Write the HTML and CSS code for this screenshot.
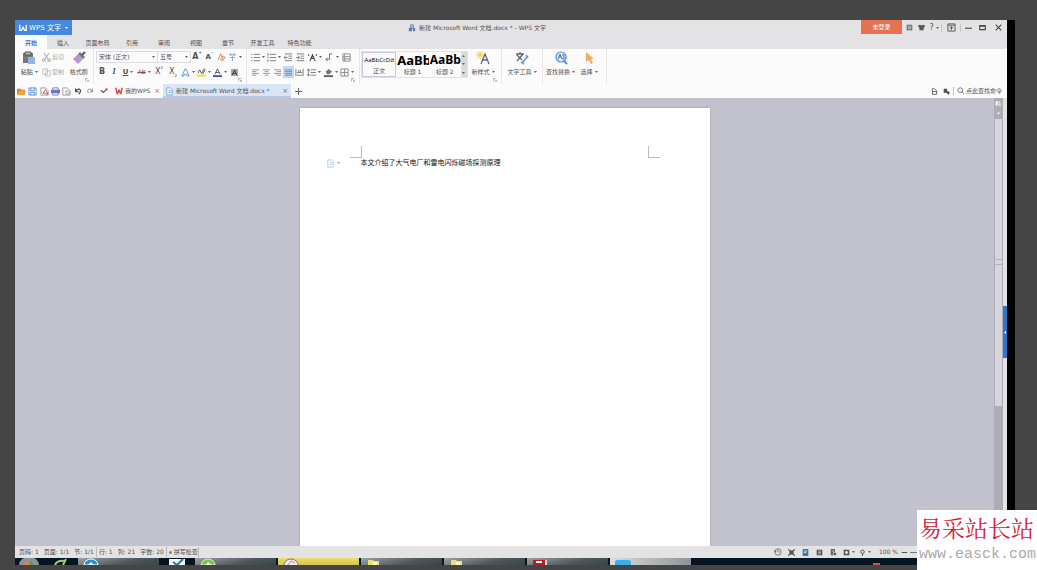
FILE: index.html
```
<!DOCTYPE html>
<html lang="zh-CN">
<head>
    <meta charset="UTF-8">
    <meta name="viewport" content="width=device-width, initial-scale=1.0">
    <title>新建 Microsoft Word 文档.docx * - WPS 文字</title>
    <link rel="stylesheet" href="styles.css">
</head>
<body>
    <svg class="sprite" aria-hidden="true">
        <symbol id="arr" viewBox="0 0 3 2"><path d="M0 0h3L1.500 2z" fill="#666"/></symbol>
        <symbol id="corner" viewBox="0 0 4 4"><path d="M.5 3.500v-3h3M1.500 1.500l2 2M3.500 2v1.500H2" fill="none" stroke="#999" stroke-width=".6"/></symbol>
        <symbol id="lines" viewBox="0 0 10 10"><path d="M1 2h8M1 4h5M1 6h8M1 8h5" stroke="#888" stroke-width=".9"/></symbol>
        <symbol id="page" viewBox="0 0 10 10"><path d="M2 1h4l2 2v6H2z" fill="#fff" stroke="#7ba3d4"/><path d="M4 4h3M4 6h3" stroke="#7ba3d4"/></symbol>
        <symbol id="wlogo" viewBox="0 0 10 10"><path d="M0 1h2l1 5 1-3h2l1 3 1-5h2L8 9H6L5 6 4 9H2z" fill="#e04348"/></symbol>
    </svg>

    <div class="screen">
        <div class="desktop">
            <div class="app">
                <header class="titlebar">
                    <button class="brand">
                        <svg class="i8" viewBox="0 0 10 10"><path d="M1 1v7h2l2-4 2 4h2V1" fill="none" stroke="#fff" stroke-width="1.600"/></svg>
                        WPS 文字
                        <svg class="arr light"><use href="#arr"/></svg>
                    </button>
                    <h1 class="title">
                        <svg class="i8" viewBox="0 0 10 10"><path d="M3 1h4v4H3z" fill="#a9bcd8" stroke="#6781a9"/><path d="M1 5h4v4H1zM6 5h3v4H6z" fill="#5d7fb5"/></svg>
                        新建 Microsoft Word 文档.docx * - WPS 文字
                    </h1>
                    <div class="window-tools">
                        <button class="login">未登录</button>
                        <button class="t12" aria-label="稻壳"><svg class="i7" viewBox="0 0 10 10"><path d="M1 1h8v8H1z" fill="#666"/><path d="M2 3h6M3 5h4v2H3z" stroke="#ddd" fill="none"/></svg></button>
                        <button class="t12" aria-label="皮肤"><svg class="i7" viewBox="0 0 10 10"><path d="M0 2l3-1q2 2 4 0l3 1-1 3H8v4H2V5H1z" fill="#555"/></svg></button>
                        <button class="t14 help">?<svg class="arr"><use href="#arr"/></svg></button>
                        <span class="sep"></span>
                        <button class="t18" aria-label="功能区"><svg class="i9" viewBox="0 0 10 10"><path d="M1 1h8v8H1zM1 2.500h8M5 8V4M3 6l2-2 2 2" fill="none" stroke="#555"/></svg></button>
                        <span class="sep"></span>
                        <button class="t14" aria-label="最小化"><svg class="i7" viewBox="0 0 10 10"><path d="M0 6h10" stroke="#444" stroke-width="1.500"/></svg></button>
                        <button class="t14" aria-label="最大化"><svg class="i7" viewBox="0 0 10 10"><path d="M1 2h8v6H1zM1 3h8" fill="none" stroke="#444" stroke-width="1.500"/></svg></button>
                        <button class="t18" aria-label="关闭"><svg class="i7" viewBox="0 0 10 10"><path d="M1 1l8 8M9 1L1 9" stroke="#444" stroke-width="1.500"/></svg></button>
                    </div>
                </header>

                <nav class="menu">
                    <a href="#" class="active">开始</a>
                    <a href="#">插入</a>
                    <a href="#" class="wide">页面布局</a>
                    <a href="#">引用</a>
                    <a href="#">审阅</a>
                    <a href="#">视图</a>
                    <a href="#">章节</a>
                    <a href="#" class="wide">开发工具</a>
                    <a href="#" class="wide">特色功能</a>
                </nav>

                <div class="ribbon">
                    <section class="group clipboard">
                        <button class="big">
                            <svg class="i14" viewBox="0 0 14 14"><path d="M1 2h10v10H1z" fill="#777"/><path d="M3 1h6v3H3z" fill="#bbb" stroke="#555"/><path d="M6 6h7v7H6z" fill="#8eb4ea"/></svg>
                            <span>粘贴<svg class="arr"><use href="#arr"/></svg></span>
                        </button>
                        <div class="stack">
                            <button class="off"><svg class="i9" viewBox="0 0 10 10"><path d="M2 0l5 7M8 0L3 7" stroke="#999"/><circle cx="2" cy="8" r="1.500" fill="none" stroke="#999"/><circle cx="8" cy="8" r="1.500" fill="none" stroke="#999"/></svg>剪切</button>
                            <button class="off"><svg class="i9" viewBox="0 0 10 10"><path d="M1 1h5v6H1zM4 3h5v6H4z" fill="#fff" stroke="#bbb"/></svg>复制</button>
                        </div>
                        <button class="big">
                            <svg class="i14" viewBox="0 0 14 14"><path d="M1 8l5-5 5 5-5 5z" fill="#b795d8"/><path d="M6 3l2-2 5 5-2 2z" fill="#777"/><path d="M10 4l3-3" stroke="#555" stroke-width="2"/></svg>
                            <span>格式刷</span>
                        </button>
                        <svg class="corner"><use href="#corner"/></svg>
                    </section>

                    <section class="group font">
                        <div class="row">
                            <label class="combo face"><select aria-label="字体"><option>宋体 (正文)</option></select><svg class="arr"><use href="#arr"/></svg></label>
                            <label class="combo size"><select aria-label="字号"><option>五号</option></select><svg class="arr"><use href="#arr"/></svg></label>
                            <button class="t12 glyph">A<sup>+</sup></button>
                            <button class="t12 glyph small">A<sup>-</sup></button>
                            <button class="t12" aria-label="清除格式"><svg class="i9" viewBox="0 0 10 10"><path d="M1 8l3-7 3 6" fill="none" stroke="#e2a04a" stroke-width="1.200"/><path d="M4 7l3-4 2 2-3 4z" fill="#f3cf8e" stroke="#b88"/></svg></button>
                            <button class="t16" aria-label="拼音"><svg class="i9" viewBox="0 0 10 10"><path d="M1 2h8M3 0v3M7 0v3M5 3v6M2 5h6" stroke="#8ba4c8"/></svg><svg class="arr"><use href="#arr"/></svg></button>
                        </div>
                        <div class="row">
                            <button class="t12 glyph">B</button>
                            <button class="t12 glyph italic">I</button>
                            <button class="t16 glyph under"><u>U</u><svg class="arr"><use href="#arr"/></svg></button>
                            <button class="t16 strike"><s>AB</s><svg class="arr"><use href="#arr"/></svg></button>
                            <button class="t14 script">X<sup>2</sup></button>
                            <button class="t14 script">X<sub>2</sub></button>
                            <button class="t16" aria-label="文字效果"><svg class="i9" viewBox="0 0 10 10"><path d="M1 9l3.500-8h1L9 9H7L6.500 7h-3L3 9z" fill="#fff" stroke="#5c8fda"/></svg><svg class="arr"><use href="#arr"/></svg></button>
                            <button class="t16" aria-label="突出显示"><svg class="i9" viewBox="0 0 10 10"><path d="M1 6l2-4 2 4M5 6l3-5 1 1-3 5" fill="none" stroke="#555"/><path d="M0 8.500h10" stroke="#f4e800" stroke-width="2"/></svg><svg class="arr"><use href="#arr"/></svg></button>
                            <button class="t16" aria-label="字体颜色"><svg class="i9" viewBox="0 0 10 10"><path d="M2 7l3-6 3 6M3 5h4" fill="none" stroke="#555"/><path d="M0 9h10" stroke="#2636a8" stroke-width="1.800"/></svg><svg class="arr"><use href="#arr"/></svg></button>
                            <button class="t12" aria-label="底纹"><svg class="i9" viewBox="0 0 10 10"><path d="M1 1h8v8H1z" fill="#aaa"/><path d="M2.500 8L5 2l2.500 6M3 6h4" fill="none" stroke="#333"/></svg></button>
                        </div>
                        <svg class="corner"><use href="#corner"/></svg>
                    </section>

                    <section class="group para">
                        <div class="row">
                            <button class="t16" aria-label="项目符号"><svg class="i9" viewBox="0 0 10 10"><path d="M3 1.500h7M3 5h7M3 8.500h7M0 1.500h1.500M0 5h1.500M0 8.500h1.500" stroke="#777"/></svg><svg class="arr"><use href="#arr"/></svg></button>
                            <button class="t16" aria-label="编号"><svg class="i9" viewBox="0 0 10 10"><path d="M3 1.500h7M3 5h7M3 8.500h7M1 0v3M1 4v2M1 7v3" stroke="#777"/></svg><svg class="arr"><use href="#arr"/></svg></button>
                            <button class="t12" aria-label="减少缩进"><svg class="i9" viewBox="0 0 10 10"><path d="M1 1h8M5 3.500h4M5 6h4M1 8.500h8M4 5H0M2 3L0 5l2 2" fill="none" stroke="#777"/></svg></button>
                            <button class="t12" aria-label="增加缩进"><svg class="i9" viewBox="0 0 10 10"><path d="M1 1h8M5 3.500h4M5 6h4M1 8.500h8M0 5h4M2 3l2 2-2 2" fill="none" stroke="#777"/></svg></button>
                            <button class="t18" aria-label="中文版式"><svg class="i9" viewBox="0 0 10 10"><path d="M2 9l3-7 3 7M3 6h4M0 1l1 2M10 1L9 3" fill="none" stroke="#444" stroke-width="1.200"/></svg><svg class="arr"><use href="#arr"/></svg></button>
                            <button class="t16" aria-label="段落标记"><svg class="i9" viewBox="0 0 10 10"><path d="M5 1h3M5 1v6M3 5L1 7l2 2M1 7h4" fill="none" stroke="#666"/></svg><svg class="arr"><use href="#arr"/></svg></button>
                            <button class="t12" aria-label="制表位"><svg class="i9" viewBox="0 0 10 10"><path d="M1 1h8v8H1zM1 4h8M1 6.500h8M3 1v8" fill="none" stroke="#888"/></svg></button>
                        </div>
                        <div class="row">
                            <button class="t11" aria-label="左对齐"><svg class="i9"><use href="#lines"/></svg></button>
                            <button class="t11" aria-label="居中"><svg class="i9" viewBox="0 0 10 10"><path d="M1 2h8M3 4h4M1 6h8M3 8h4" stroke="#888" stroke-width=".9"/></svg></button>
                            <button class="t11" aria-label="右对齐"><svg class="i9" viewBox="0 0 10 10"><path d="M1 2h8M4 4h5M1 6h8M4 8h5" stroke="#888" stroke-width=".9"/></svg></button>
                            <button class="t11 on" aria-label="两端对齐"><svg class="i9" viewBox="0 0 10 10"><path d="M1 2h8M1 4h8M1 6h8M1 8h8" stroke="#5f7da8" stroke-width=".9"/></svg></button>
                            <button class="t11" aria-label="分散对齐"><svg class="i9" viewBox="0 0 10 10"><path d="M1 1v8M9 1v8M2 5h6M2 8h6M4 2v3M6 2v3" stroke="#777"/></svg></button>
                            <button class="t18" aria-label="行距"><svg class="i9" viewBox="0 0 10 10"><path d="M4 2h6M4 5h6M4 8h6M1.500 1v8M0 3l1.500-2L3 3M0 7l1.500 2L3 7" fill="none" stroke="#777"/></svg><svg class="arr"><use href="#arr"/></svg></button>
                            <button class="t16" aria-label="填充"><svg class="i9" viewBox="0 0 10 10"><path d="M2 4l3-3 4 3-3 3H3z" fill="#777"/><path d="M0 9h10" stroke="#333" stroke-width="1.600"/></svg><svg class="arr"><use href="#arr"/></svg></button>
                            <button class="t16" aria-label="边框"><svg class="i9" viewBox="0 0 10 10"><path d="M1 1h8v8H1zM5 1v8M1 5h8" fill="none" stroke="#888"/></svg><svg class="arr"><use href="#arr"/></svg></button>
                        </div>
                        <svg class="corner"><use href="#corner"/></svg>
                    </section>

                    <section class="group styles">
                        <div class="gallery">
                            <button class="style current"><span class="sample">AaBbCcDd</span><span>正文</span></button>
                            <button class="style"><span class="sample h">AaBb</span><span>标题 1</span></button>
                            <button class="style"><span class="sample h2">AaBb(</span><span>标题 2</span></button>
                            <div class="spin">
                                <button aria-label="上一行"><svg class="arr up"><use href="#arr"/></svg></button>
                                <button aria-label="下一行"><svg class="arr"><use href="#arr"/></svg></button>
                                <button aria-label="更多"><svg class="arr"><use href="#arr"/></svg></button>
                            </div>
                        </div>
                        <button class="big">
                            <svg class="i14" viewBox="0 0 14 14"><path d="M5 13l4-10 4 10M6.500 9h5" fill="none" stroke="#666" stroke-width="1.300"/><path d="M4 0v8M0 4h8M1 1l6 6M7 1L1 7" stroke="#f2c744"/></svg>
                            <span>新样式<svg class="arr"><use href="#arr"/></svg></span>
                        </button>
                        <svg class="corner"><use href="#corner"/></svg>
                    </section>

                    <section class="group text-tools">
                        <button class="big">
                            <svg class="i14" viewBox="0 0 14 14"><path d="M1 3h8M5 1v2M2 10l6-7M2 4l5 5" fill="none" stroke="#666" stroke-width="1.300"/><path d="M7 12l5-6M11 4l2 3M6 11l3 2" stroke="#6b99dc" stroke-width="1.800"/></svg>
                            <span>文字工具<svg class="arr"><use href="#arr"/></svg></span>
                        </button>
                    </section>

                    <section class="group search">
                        <button class="big">
                            <svg class="i14" viewBox="0 0 14 14"><circle cx="7" cy="6" r="5" fill="#e5f0fc" stroke="#4f8ed8" stroke-width="1.200"/><path d="M10 10l3 3" stroke="#4f8ed8" stroke-width="2"/><path d="M4 8l2-5 2 5M5 6h2M8 4h2v4H8" fill="none" stroke="#4775ad"/></svg>
                            <span>查找替换<svg class="arr"><use href="#arr"/></svg></span>
                        </button>
                        <button class="big">
                            <svg class="i14" viewBox="0 0 14 14"><path d="M4 1l8 7H9l2 4-2 1-2-4-3 2z" fill="#f2aa62"/></svg>
                            <span>选择<svg class="arr"><use href="#arr"/></svg></span>
                        </button>
                    </section>
                </div>

                <div class="docbar">
                    <div class="quick">
                        <button class="t12" aria-label="打开"><svg class="i9" viewBox="0 0 10 10"><path d="M0 2h4l1 1h4v5H0z" fill="#d97b22"/><path d="M2 4h8L8 9H0z" fill="#f5a33c"/></svg></button>
                        <button class="t11" aria-label="保存"><svg class="i9" viewBox="0 0 10 10"><path d="M1 1h8v8H1z" fill="#e8f2fd" stroke="#5c94d6"/><path d="M3 1v3h4V1M3 9V6h4v3" fill="none" stroke="#5c94d6"/></svg></button>
                        <button class="t12" aria-label="输出PDF"><svg class="i9" viewBox="0 0 10 10"><path d="M1 1h5l3 3v5H1z" fill="#fff" stroke="#999"/><path d="M3 8l3-5 3 5-6-2" fill="none" stroke="#d65050"/></svg></button>
                        <button class="t11" aria-label="打印"><svg class="i9" viewBox="0 0 10 10"><path d="M2 1h6v8H2z" fill="#fff" stroke="#7476bd"/><path d="M0 3h10v4H0z" fill="#7476bd"/></svg></button>
                        <button class="t11" aria-label="预览"><svg class="i9" viewBox="0 0 10 10"><path d="M1 1h5l3 3v5H1z" fill="#fff" stroke="#999"/><circle cx="6" cy="6" r="2" fill="none" stroke="#75a064"/></svg></button>
                        <button class="t12" aria-label="撤销"><svg class="i8" viewBox="0 0 10 10"><path d="M2 2v4h4M2 6c2-5 7-4 6 0L6 9" fill="none" stroke="#444" stroke-width="1.400"/></svg></button>
                        <button class="t12" aria-label="恢复"><svg class="i8" viewBox="0 0 10 10"><path d="M8 2v4H5M8 6C7 1 1 2 2 6l2 2" fill="none" stroke="#777"/></svg></button>
                        <button class="t16" aria-label="切换"><svg class="i8" viewBox="0 0 10 10"><path d="M1 4l3 3 3-3" fill="none" stroke="#444" stroke-width="1.300"/><circle cx="8" cy="3" r="1.500" fill="#d44"/></svg></button>
                    </div>
                    <a class="tab home" href="#"><svg class="i8"><use href="#wlogo"/></svg><span>我的WPS</span><b>×</b></a>
                    <a class="tab current" href="#"><svg class="i9"><use href="#page"/></svg><span>新建 Microsoft Word 文档.docx *</span><b>×</b></a>
                    <button class="t14 plus" aria-label="新建"><svg class="i7" viewBox="0 0 10 10"><path d="M5 0v10M0 5h10" stroke="#666" stroke-width="1.500"/></svg></button>
                    <div class="find">
                        <button class="t12" aria-label="文档"><svg class="i7" viewBox="0 0 10 10"><path d="M2 1h3l3 3v5H2zM2 5h6" fill="none" stroke="#555" stroke-width="1.200"/></svg></button>
                        <button class="t12" aria-label="云文档"><svg class="i7" viewBox="0 0 10 10"><path d="M1 1h5v6H1z" fill="#555"/><path d="M5 5h4v4H7z" fill="#333"/></svg></button>
                        <span class="sep"></span>
                        <button class="command"><svg class="i8" viewBox="0 0 10 10"><circle cx="4" cy="4" r="3" fill="none" stroke="#666"/><path d="M6 6l3 3" stroke="#666"/></svg>点此查找命令</button>
                    </div>
                </div>

                <main class="workspace">
                    <div class="canvas">
                        <article class="paper">
                            <div class="margins"><i></i><i></i></div>
                            <div class="line">
                                <svg class="i9"><use href="#page"/></svg><svg class="arr"><use href="#arr"/></svg>
                                <p>本文介绍了大气电厂和雷电闪烁磁场探测原理</p>
                            </div>
                        </article>
                    </div>
                    <div class="scroll">
                        <button aria-label="标尺"><svg class="i7" viewBox="0 0 10 10"><path d="M1 2h6v6H1z" fill="#fff"/><path d="M4 4h5v5H4z" fill="#ddd" stroke="#aaa"/></svg></button>
                        <button aria-label="向上"><svg class="arr up light"><use href="#arr"/></svg></button>
                        <div class="thumb"><i></i></div>
                    </div>
                    <aside class="pane"><button aria-label="任务窗格"><svg class="i3" viewBox="0 0 3 3"><path d="M2 0v3L0 1.500z" fill="#fff"/></svg></button></aside>
                </main>

                <footer class="status">
                    <span>页码: 1</span><span>页面: 1/1</span><span>节: 1/1</span><span class="line-no">行: 1</span><span>列: 21</span><span>字数: 20</span><span class="spell"><i></i>拼写检查</span>
                    <div class="views">
                        <button class="t14" aria-label="历史"><svg class="i8" viewBox="0 0 10 10"><circle cx="5" cy="5" r="4" fill="none" stroke="#666"/><path d="M5 2v3h2M0 3l1 2 2-1" fill="none" stroke="#666"/></svg></button>
                        <button class="t14" aria-label="全屏"><svg class="i7" viewBox="0 0 10 10"><path d="M0 0l3 3M10 0L7 3M0 10l3-3M10 10L7 7" stroke="#555" stroke-width="1.500"/><path d="M2 2h6v6H2z" fill="#555"/></svg></button>
                        <button class="t14" aria-label="页面"><svg class="i7" viewBox="0 0 10 10"><path d="M1 0h8v10H1z" fill="#3f77a8"/><path d="M3 3h4M3 5h3" stroke="#fff"/></svg></button>
                        <button class="t14" aria-label="大纲"><svg class="i7" viewBox="0 0 10 10"><path d="M1 1h8v8H1z" fill="#555"/><path d="M3 3h4M3 5h4M3 7h4" stroke="#ccc"/></svg></button>
                        <button class="t14" aria-label="网页"><svg class="i7" viewBox="0 0 10 10"><path d="M1 0h6v9H1z" fill="#666"/><path d="M3 3h3M5 5h4v4H5z" stroke="#ddd" fill="#444"/></svg></button>
                        <button class="t16" aria-label="护眼"><svg class="i7" viewBox="0 0 10 10"><path d="M1 1h8v8H1z" fill="#555"/><circle cx="5" cy="5" r="2" fill="#eee"/></svg><svg class="arr"><use href="#arr"/></svg></button>
                        <button class="t16" aria-label="定位"><svg class="i7" viewBox="0 0 10 10"><circle cx="5" cy="4" r="2.500" fill="none" stroke="#555" stroke-width="1.400"/><path d="M5 7v3" stroke="#555" stroke-width="1.400"/></svg><svg class="arr"><use href="#arr"/></svg></button>
                        <span class="zoom">100 %</span>
                        <button class="t11" aria-label="缩小"><svg class="i7" viewBox="0 0 10 10"><path d="M1 5h8" stroke="#555" stroke-width="1.500"/></svg></button>
                        <input type="range" aria-label="缩放">
                    </div>
                </footer>
            </div>
        </div>

        <div class="taskbar">
            <button class="launch" aria-label="开始菜单"><svg viewBox="0 0 20 7"><path d="M0 7a10 8 0 0 1 20 0z" fill="#8a939c"/><path d="M4 7q2-4 6-4v4z" fill="#d98943"/><path d="M10 3q4 0 5 4h-5z" fill="#6d9a62"/></svg></button>
            <button class="launch" aria-label="浏览器"><svg viewBox="0 0 20 7"><path d="M4 7q2-5 10-4M12 7l3-6" fill="none" stroke="#a5cf6d" stroke-width="2"/></svg></button>
            <button class="task"><svg viewBox="0 0 16 7"><path d="M1 7a7 6 0 0 1 14 0z" fill="#2492d1" stroke="#fff"/><path d="M5 7l3-3 3 3" fill="#fff"/></svg></button>
            <button class="launch pinned" aria-label="邮件"><svg viewBox="0 0 20 7"><path d="M2 1h16v6H2z" fill="#f4f8fa"/><path d="M6 4l4 3 6-6" fill="none" stroke="#2a78a8" stroke-width="2"/></svg></button>
            <button class="task"><svg viewBox="0 0 16 7"><path d="M1 7a7 6 0 0 1 14 0z" fill="#7bc54b" stroke="#d7efc7"/><path d="M6 7l2-3 3 3" fill="#fff"/></svg></button>
            <button class="task yellow"><svg viewBox="0 0 16 7"><path d="M1 7a7 6 0 0 1 14 0" fill="#eee" stroke="#777"/><path d="M5 7l3-4 4 2" fill="none" stroke="#999"/></svg></button>
            <button class="task"><svg viewBox="0 0 16 7"><path d="M2 2h5l1 1h5v4H2z" fill="#f0df7f"/><path d="M7 4h4v3H7z" fill="#fff6bd"/></svg></button>
            <button class="task"><svg viewBox="0 0 16 7"><path d="M2 2h5l1 1h5v4H2z" fill="#f0df7f"/><path d="M7 4h4v3H7z" fill="#fff6bd"/></svg></button>
            <button class="task"><svg viewBox="0 0 16 7"><path d="M12 2h3v5h-3z" fill="#ddd"/><path d="M1 2h12v5H1z" fill="#b81d29"/><path d="M4 4h6" stroke="#fff" stroke-width="2"/></svg></button>
            <button class="task pale"><svg viewBox="0 0 16 7"><path d="M0 7V4q0-2 3-2h10q3 0 3 2v3z" fill="#35b0ee"/></svg></button>
            <span class="tray"></span>
        </div>
    </div>

    <div class="watermark">
        <strong>易采站长站</strong>
        <a href="#">www.easck.com</a>
    </div>
</body>
</html>
```
FILE: styles.css
```
* {
    box-sizing: border-box;
}

body {
    margin: 0;
    background: #454545;
    color: #505050;
    font: 6px/10px "DejaVu Sans", "Noto Sans CJK SC", sans-serif;
    overflow: hidden;
}

button, select {
    font: inherit;
    color: inherit;
    background: none;
    border: 0;
    padding: 0;
    margin: 0;
    white-space: nowrap;
}

button {
    display: flex;
    align-items: center;
    justify-content: center;
    flex: none;
    cursor: pointer;
}

a {
    color: inherit;
    text-decoration: none;
}

svg {
    flex: none;
}

.sprite {
    display: none;
}

.arr { width: 3px; height: 2px; margin-left: 2px; }
.arr.up { transform: rotate(180deg); }
.arr.light { filter: brightness(3); }
.i3 { width: 3px; height: 3px; }
.i7 { width: 7px; height: 7px; }
.i8 { width: 8px; height: 8px; }
.i9 { width: 9px; height: 9px; }
.i14 { width: 14px; height: 14px; }

.t11 { width: 11px; }
.t12 { width: 12px; }
.t14 { width: 14px; }
.t16 { width: 16px; }
.t18 { width: 18px; }

.sep {
    width: 1px;
    height: 8px;
    background: #c4c4c6;
}

.screen {
    display: flex;
    flex-direction: column;
    height: 100vh;
    padding: 20px 22px 5px 15px;
}

.desktop {
    flex: 1;
    display: flex;
    min-height: 0;
    padding-right: 8px;
    background: #000;
}

.app {
    flex: 1;
    min-width: 0;
    display: flex;
    flex-direction: column;
    background: #e3e3e6;
}

/* title */
.titlebar {
    display: grid;
    grid-template-columns: 1fr auto 1fr;
    height: 15px;
}

.brand {
    justify-self: start;
    width: 57px;
    gap: 2px;
    background: #4489df;
    color: #fff;
    font-size: 7px;
}

.title {
    display: flex;
    align-items: center;
    gap: 3px;
    margin: 0 68px 0 0;
    font-size: 6px;
    font-weight: normal;
}

.window-tools {
    display: flex;
    align-items: center;
    justify-self: end;
}

.login {
    width: 41px;
    height: 14px;
    margin-right: 1px;
    align-self: flex-start;
    background: #e5714f;
    color: #fff;
}

.help {
    font-size: 8px;
}

.menu {
    display: flex;
    height: 14px;
}

.menu a {
    width: 32px;
    text-align: center;
    line-height: 15px;
}

.menu .wide {
    width: 37px;
}

.menu .active {
    background: #fbfbfc;
    color: #2a78d0;
    font-weight: bold;
}

/* ribbon */
.ribbon {
    display: flex;
    height: 35px;
    background: #fbfbfc;
}

.group {
    position: relative;
    display: flex;
    padding: 2px 3px;
    border-right: 1px solid #e6e6ea;
}

.font, .para {
    flex-direction: column;
    gap: 3px;
}

.clipboard { width: 79px; }
.font { width: 153px; padding-left: 2px; }
.para { width: 113px; }
.styles { width: 142px; padding-left: 1px; }
.text-tools { width: 41px; }
.search { width: 64px; }

.row {
    display: flex;
    height: 12px;
}

.corner {
    position: absolute;
    right: 4px;
    bottom: 2px;
    width: 4px;
    height: 4px;
}

.big {
    flex-direction: column;
    justify-content: flex-start;
    gap: 2px;
    flex: 1;
    height: 28px;
}

.big span {
    display: flex;
    align-items: center;
}

.stack {
    display: flex;
    flex-direction: column;
    gap: 3px;
    width: 25px;
    margin-right: 2px;
}

.stack button {
    height: 12px;
    gap: 1px;
}

.off {
    color: #aaa;
}

.combo {
    display: flex;
    align-items: center;
    height: 12px;
    padding: 0 2px;
    border: 1px solid #dcdce0;
}

.combo select {
    flex: 1;
    min-width: 0;
    appearance: none;
}

.face { width: 62px; }
.size { width: 33px; border-left: 0; }

.glyph {
    font-size: 8px;
    font-weight: bold;
}

.glyph.small {
    font-size: 7px;
}

.glyph.italic {
    font-family: "Liberation Serif", serif;
    font-style: italic;
}

.glyph.under {
    font-size: 7px;
}

.glyph sup, .script sup, .script sub {
    font-size: 4px;
    line-height: 4px;
}

.glyph sup, .script sup {
    align-self: flex-start;
}

.script sub {
    align-self: flex-end;
}

.script {
    font-size: 8px;
}

.strike {
    color: #8c4a58;
}

.on {
    background: #c5d8f1;
}

.gallery {
    display: flex;
    width: 107px;
    height: 27px;
    border: 1px solid #e2e2e6;
}

.style {
    flex: 1;
    min-width: 0;
    flex-direction: column;
    justify-content: space-between;
    overflow: hidden;
}

.style.current {
    border: 1px solid #c3cbdc;
}

.sample {
    display: flex;
    align-items: center;
    height: 15px;
    color: #000;
    font-family: "Open Sans", sans-serif;
}

.sample.h, .sample.h2 {
    align-self: flex-start;
    padding-left: 1px;
    font-family: "Noto Sans", sans-serif;
    font-weight: bold;
    font-size: 13px;
}

.sample.h2 {
    font-size: 12px;
}

.spin {
    display: flex;
    flex-direction: column;
    width: 6px;
    background: #d9d9de;
}

.spin button {
    flex: 1;
}

.spin .arr {
    margin: 0;
}

/* document tabs */
.docbar {
    display: flex;
    height: 14px;
    background: #fbfbfc;
}

.quick {
    display: flex;
    margin-right: 1px;
}

.tab {
    display: flex;
    align-items: center;
    gap: 2px;
    padding: 0 3px 0 2px;
}

.tab b {
    margin-left: auto;
    font-size: 7px;
    font-weight: normal;
    color: #777;
}

.home {
    width: 50px;
}

.tab.current {
    width: 128px;
    background: #d9e4f5;
    box-shadow: inset 0 -2px #b4c9e8;
}

.find {
    display: flex;
    align-items: center;
    margin-left: auto;
    padding-right: 5px;
}

.command {
    gap: 1px;
    padding-left: 3px;
}

/* document */
.workspace {
    flex: 1;
    display: flex;
    min-height: 0;
    background: #c2c2ce;
}

.canvas {
    flex: 1;
    display: flex;
    justify-content: center;
    padding-top: 10px;
    overflow: hidden;
}

.paper {
    width: 410px;
    background: #fff;
    box-shadow: 0 0 2px #9a9aa6;
}

.margins {
    display: flex;
    justify-content: space-between;
    padding: 38px 50px 0;
}

.margins i {
    width: 12px;
    height: 12px;
    border: solid #bbb;
    border-width: 0 1px 1px 0;
}

.margins i + i {
    border-width: 0 0 1px 1px;
}

.line {
    display: flex;
    align-items: center;
    padding-left: 26px;
}

.line svg {
    opacity: .6;
}

.line p {
    margin: 0 0 0 21px;
    color: #111;
    font-size: 7px;
}

.scroll {
    display: flex;
    flex-direction: column;
    width: 9px;
    background: #adadb5;
}

.scroll button {
    height: 10px;
}

.scroll .arr {
    margin: 0;
}

.thumb {
    display: flex;
    align-items: center;
    height: 64%;
    margin: 1px;
    background: #d5d5db;
}

.thumb i {
    width: 7px;
    height: 6px;
    border: solid #b5b5bd;
    border-width: 1px 0;
}

.pane {
    display: flex;
    align-items: center;
    width: 4px;
    background: #e3e3e6;
}

.pane button {
    width: 4px;
    height: 52px;
    margin-top: 20px;
    background: #2f74d0;
}

.status {
    display: flex;
    align-items: center;
    gap: 5px;
    height: 12px;
    padding-left: 4px;
    background: #e3e3e3;
}

.line-no, .spell {
    border-left: 1px solid #bbb;
    padding-left: 2px;
    margin-left: -3px;
}

.spell {
    display: flex;
    align-items: center;
    gap: 2px;
    border-right: 1px solid #bbb;
}

.spell i {
    width: 3px;
    height: 3px;
    border-radius: 50%;
    background: #49b52c;
}

.views {
    display: flex;
    align-items: center;
    margin-left: auto;
}

.zoom {
    padding: 0 1px 0 6px;
}

.views input {
    width: 97px;
    height: 1px;
    margin: 0;
    appearance: none;
    background: #777;
}

/* windows taskbar */
.taskbar {
    display: flex;
    height: 7px;
    gap: 2px;
    padding-left: 3px;
    background: #071522;
    overflow: hidden;
}

.taskbar svg {
    height: 7px;
}

.launch {
    width: 22px;
}

.launch + .launch {
    width: 30px;
    margin-left: 4px;
}

.launch.pinned {
    width: 32px;
}

.task {
    width: 81px;
    justify-content: flex-start;
    padding-left: 5px;
    background: linear-gradient(165deg, #9aa3a6, #4c585e 60%, #36444c);
}

.task.yellow {
    background: linear-gradient(#e9dc7a, #dcc63c);
}

.task.pale {
    background: linear-gradient(90deg, #ddd, #8c9498);
}

.tray {
    width: 7px;
    height: 2px;
    margin: 5px 135px 0 auto;
    background: #e0533e;
}

/* site mark over the corner of the screen */
.watermark {
    position: fixed;
    right: 0;
    bottom: 0;
    width: 120px;
    height: 60px;
    padding: 3px 2px;
    background: #fff;
    white-space: nowrap;
}

.watermark strong {
    display: block;
    color: #d6203a;
    font: 23px/29px "Noto Serif CJK SC", "Noto Sans CJK SC", serif;
}

.watermark a {
    display: block;
    color: #aaa;
    font: 15px/26px "Liberation Mono", monospace;
}
```
